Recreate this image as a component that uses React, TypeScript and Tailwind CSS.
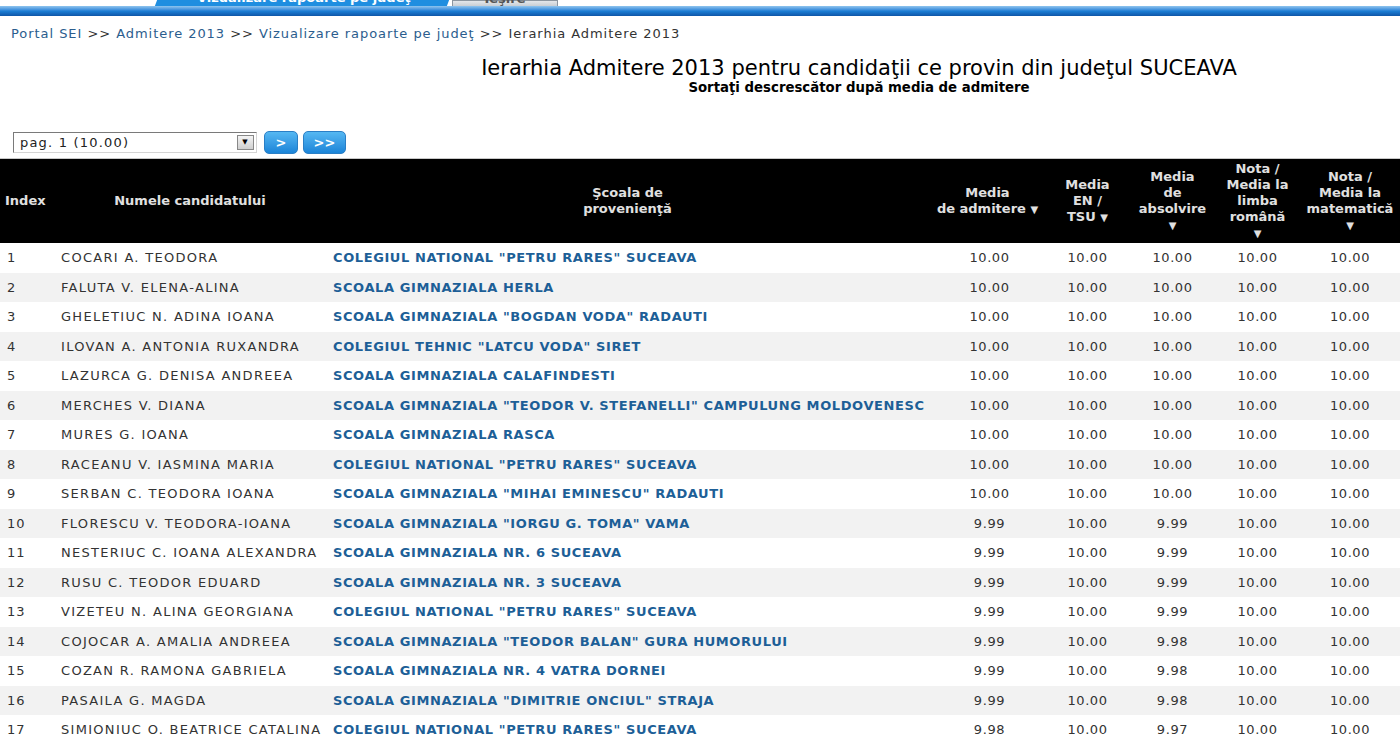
import React from 'react';

// Ierarhia Admitere 2013 — raport pe judeţ (tabel candidaţi)

type Row = {
  name: string;
  school: string;
  adm: string;
  en: string;
  abs: string;
  ro: string;
  mat: string;
};

const rows: Row[] = [
  { name: 'COCARI A. TEODORA', school: 'COLEGIUL NATIONAL "PETRU RARES" SUCEAVA', adm: '10.00', en: '10.00', abs: '10.00', ro: '10.00', mat: '10.00' },
  { name: 'FALUTA V. ELENA-ALINA', school: 'SCOALA GIMNAZIALA HERLA', adm: '10.00', en: '10.00', abs: '10.00', ro: '10.00', mat: '10.00' },
  { name: 'GHELETIUC N. ADINA IOANA', school: 'SCOALA GIMNAZIALA "BOGDAN VODA" RADAUTI', adm: '10.00', en: '10.00', abs: '10.00', ro: '10.00', mat: '10.00' },
  { name: 'ILOVAN A. ANTONIA RUXANDRA', school: 'COLEGIUL TEHNIC "LATCU VODA" SIRET', adm: '10.00', en: '10.00', abs: '10.00', ro: '10.00', mat: '10.00' },
  { name: 'LAZURCA G. DENISA ANDREEA', school: 'SCOALA GIMNAZIALA CALAFINDESTI', adm: '10.00', en: '10.00', abs: '10.00', ro: '10.00', mat: '10.00' },
  { name: 'MERCHES V. DIANA', school: 'SCOALA GIMNAZIALA "TEODOR V. STEFANELLI" CAMPULUNG MOLDOVENESC', adm: '10.00', en: '10.00', abs: '10.00', ro: '10.00', mat: '10.00' },
  { name: 'MURES G. IOANA', school: 'SCOALA GIMNAZIALA RASCA', adm: '10.00', en: '10.00', abs: '10.00', ro: '10.00', mat: '10.00' },
  { name: 'RACEANU V. IASMINA MARIA', school: 'COLEGIUL NATIONAL "PETRU RARES" SUCEAVA', adm: '10.00', en: '10.00', abs: '10.00', ro: '10.00', mat: '10.00' },
  { name: 'SERBAN C. TEODORA IOANA', school: 'SCOALA GIMNAZIALA "MIHAI EMINESCU" RADAUTI', adm: '10.00', en: '10.00', abs: '10.00', ro: '10.00', mat: '10.00' },
  { name: 'FLORESCU V. TEODORA-IOANA', school: 'SCOALA GIMNAZIALA "IORGU G. TOMA" VAMA', adm: '9.99', en: '10.00', abs: '9.99', ro: '10.00', mat: '10.00' },
  { name: 'NESTERIUC C. IOANA ALEXANDRA', school: 'SCOALA GIMNAZIALA NR. 6 SUCEAVA', adm: '9.99', en: '10.00', abs: '9.99', ro: '10.00', mat: '10.00' },
  { name: 'RUSU C. TEODOR EDUARD', school: 'SCOALA GIMNAZIALA NR. 3 SUCEAVA', adm: '9.99', en: '10.00', abs: '9.99', ro: '10.00', mat: '10.00' },
  { name: 'VIZETEU N. ALINA GEORGIANA', school: 'COLEGIUL NATIONAL "PETRU RARES" SUCEAVA', adm: '9.99', en: '10.00', abs: '9.99', ro: '10.00', mat: '10.00' },
  { name: 'COJOCAR A. AMALIA ANDREEA', school: 'SCOALA GIMNAZIALA "TEODOR BALAN" GURA HUMORULUI', adm: '9.99', en: '10.00', abs: '9.98', ro: '10.00', mat: '10.00' },
  { name: 'COZAN R. RAMONA GABRIELA', school: 'SCOALA GIMNAZIALA NR. 4 VATRA DORNEI', adm: '9.99', en: '10.00', abs: '9.98', ro: '10.00', mat: '10.00' },
  { name: 'PASAILA G. MAGDA', school: 'SCOALA GIMNAZIALA "DIMITRIE ONCIUL" STRAJA', adm: '9.99', en: '10.00', abs: '9.98', ro: '10.00', mat: '10.00' },
  { name: 'SIMIONIUC O. BEATRICE CATALINA', school: 'COLEGIUL NATIONAL "PETRU RARES" SUCEAVA', adm: '9.98', en: '10.00', abs: '9.97', ro: '10.00', mat: '10.00' },
];

const cols = 'grid grid-cols-[55px_270px_605px_115px_85px_85px_85px_100px]';

function Arrow() {
  return <span className="inline-block text-[10px] leading-none align-middle">▼</span>;
}

export default function App() {
  return (
    <div className="w-[1400px] h-[735px] overflow-hidden bg-white font-['DejaVu_Sans',Verdana,sans-serif] text-[#333]">
      {/* tab strip (cut at the top of the page) + blue bar */}
      <div className="flex h-[6px] items-end overflow-hidden pl-[156px]">
        <div className="h-[6px] w-[292px] skew-x-[-20deg] bg-[#1f8ee0]">
          <div className="skew-x-[20deg] -mt-[9px] text-center text-[13px] font-bold leading-[14px] text-white">
            Vizualizare rapoarte pe judeţ
          </div>
        </div>
        <div className="ml-[4px] h-[6px] w-[106px] border border-b-0 border-[#8c96a0] bg-gradient-to-b from-[#e4e7ea] to-[#c9ced4]">
          <div className="-mt-[9px] text-center text-[13px] font-bold leading-[14px] text-[#555]">Ieşire</div>
        </div>
      </div>
      <div className="h-[10px] bg-gradient-to-b from-[#8fc4ee] via-[#1c7fd6] to-[#0f56a8]" />

      {/* breadcrumb */}
      <div className="flex h-[34px] items-center pl-[11px] pt-[2px] text-[13px] tracking-[0.95px] text-[#2b5d8e]">
        <span>Portal SEI</span>
        <span className="text-[#333]">&nbsp;&gt;&gt;&nbsp;</span>
        <span>Admitere 2013</span>
        <span className="text-[#333]">&nbsp;&gt;&gt;&nbsp;</span>
        <span>Vizualizare rapoarte pe judeţ</span>
        <span className="text-[#333]">&nbsp;&gt;&gt;&nbsp;Ierarhia Admitere 2013</span>
      </div>

      {/* title */}
      <div className="w-[1718px] pt-[6px] text-center">
        <div className="text-[21px] leading-[24px] text-black">
          Ierarhia Admitere 2013 pentru candidaţii ce provin din judeţul SUCEAVA
        </div>
        <div className="text-[13.3px] font-bold leading-[15px] text-black">
          Sortaţi descrescător după media de admitere
        </div>
      </div>

      {/* paginare */}
      <div className="flex items-center gap-[6px] pl-[13px] pt-[36px]">
        <div className="flex h-[21px] w-[244px] items-center justify-between border border-[#7a7a7a] border-r-[#d4d4d4] border-b-[#d4d4d4] bg-white pl-[6px] pr-[2px] text-[13px] tracking-[1.2px] text-[#222]">
          <span>pag. 1 (10.00)</span>
          <span className="flex h-[15px] w-[17px] items-center justify-center border border-[#888] bg-gradient-to-b from-[#f4f4f4] to-[#cfcfcf] text-[7px] text-black">
            ▼
          </span>
        </div>
        <button className="ml-[1px] h-[23px] w-[34px] rounded-[5px] border border-[#2a7fc6] bg-gradient-to-b from-[#55b8f2] to-[#1a84d8] text-[13px] font-bold text-white">
          &gt;
        </button>
        <button className="-ml-[1px] h-[23px] w-[43px] rounded-[5px] border border-[#2a7fc6] bg-gradient-to-b from-[#55b8f2] to-[#1a84d8] text-[13px] font-bold text-white">
          &gt;&gt;
        </button>
      </div>

      {/* tabel */}
      <div className="mt-[4px] border-t border-[#c8c8c8]">
        <div className={`${cols} h-[84px] items-center bg-black text-[13px] font-bold leading-[16px] text-[#e0e0e0]`}>
          <div className="pl-[5px]">Index</div>
          <div className="text-center">Numele candidatului</div>
          <div className="text-center">
            Şcoala de
            <br />
            provenienţă
          </div>
          <div className="text-center">
            Media
            <br />
            de admitere <Arrow />
          </div>
          <div className="text-center">
            Media
            <br />
            EN /
            <br />
            TSU <Arrow />
          </div>
          <div className="text-center">
            Media
            <br />
            de
            <br />
            absolvire
            <br />
            <Arrow />
          </div>
          <div className="text-center">
            Nota /
            <br />
            Media la
            <br />
            limba
            <br />
            română
            <br />
            <Arrow />
          </div>
          <div className="text-center">
            Nota /
            <br />
            Media la
            <br />
            matematică
            <br />
            <Arrow />
          </div>
        </div>

        {rows.map((r, i) => (
          <div
            key={i}
            className={`${cols} h-[29.5px] items-center text-[13px] ${i % 2 === 1 ? 'bg-[#f2f2f2]' : 'bg-white'}`}
          >
            <div className="pl-[7px] tracking-[1px]">{i + 1}</div>
            <div className="whitespace-nowrap pl-[6px] tracking-[1.3px]">{r.name}</div>
            <div className="whitespace-nowrap pl-[8px] text-[13px] font-bold tracking-[0.6px] text-[#1d5f97]">{r.school}</div>
            <div className="pl-[4px] text-center tracking-[0.6px]">{r.adm}</div>
            <div className="text-center tracking-[0.6px]">{r.en}</div>
            <div className="text-center tracking-[0.6px]">{r.abs}</div>
            <div className="text-center tracking-[0.6px]">{r.ro}</div>
            <div className="text-center tracking-[0.6px]">{r.mat}</div>
          </div>
        ))}
      </div>
    </div>
  );
}
